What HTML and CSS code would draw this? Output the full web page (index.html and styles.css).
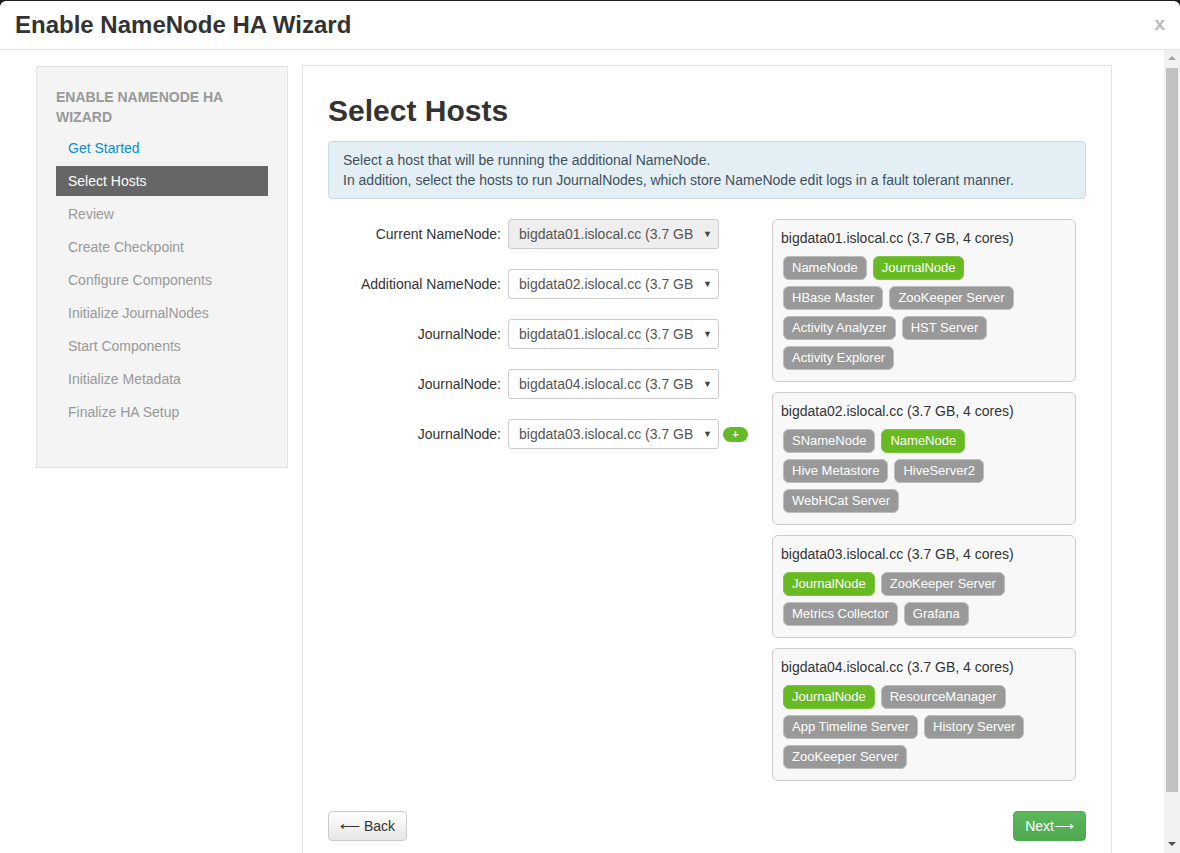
FILE: index.html
```html
<!DOCTYPE html>
<html>
<head>
<meta charset="utf-8">
<link rel="stylesheet" href="styles.css">
</head>
<body>
<div class="modal">
  <div class="modal-header">
    <h3 class="modal-title">Enable NameNode HA Wizard</h3>
    <span class="close">x</span>
  </div>
  <div class="modal-body">
    <div class="content">
      <div class="sidebar">
        <div class="nav-header">ENABLE NAMENODE HA WIZARD</div>
        <ul class="nav">
          <li class="done">Get Started</li>
          <li class="active">Select Hosts</li>
          <li>Review</li>
          <li>Create Checkpoint</li>
          <li>Configure Components</li>
          <li>Initialize JournalNodes</li>
          <li>Start Components</li>
          <li>Initialize Metadata</li>
          <li>Finalize HA Setup</li>
        </ul>
      </div>
      <div class="main">
        <h2 class="title">Select Hosts</h2>
        <div class="alert">Select a host that will be running the additional NameNode.<br>In addition, select the hosts to run JournalNodes, which store NameNode edit logs in a fault tolerant manner.</div>
        <div class="assign">
          <div class="form">
            <div class="row"><label>Current NameNode:</label><div class="select disabled"><span>bigdata01.islocal.cc (3.7 GB</span><i class="caret">▼</i></div></div>
            <div class="row"><label>Additional NameNode:</label><div class="select"><span>bigdata02.islocal.cc (3.7 GB</span><i class="caret">▼</i></div></div>
            <div class="row"><label>JournalNode:</label><div class="select"><span>bigdata01.islocal.cc (3.7 GB</span><i class="caret">▼</i></div></div>
            <div class="row"><label>JournalNode:</label><div class="select"><span>bigdata04.islocal.cc (3.7 GB</span><i class="caret">▼</i></div></div>
            <div class="row"><label>JournalNode:</label><div class="select"><span>bigdata03.islocal.cc (3.7 GB</span><i class="caret">▼</i></div><span class="plus">+</span></div>
          </div>
          <div class="hosts">
            <div class="host">
              <div class="host-name">bigdata01.islocal.cc (3.7 GB, 4 cores)</div>
              <div class="badges">
                <span class="badge">NameNode</span><span class="badge green">JournalNode</span>
                <span class="badge">HBase Master</span><span class="badge">ZooKeeper Server</span>
                <span class="badge">Activity Analyzer</span><span class="badge">HST Server</span>
                <span class="badge">Activity Explorer</span>
              </div>
            </div>
            <div class="host">
              <div class="host-name">bigdata02.islocal.cc (3.7 GB, 4 cores)</div>
              <div class="badges">
                <span class="badge">SNameNode</span><span class="badge green">NameNode</span>
                <span class="badge">Hive Metastore</span><span class="badge">HiveServer2</span>
                <span class="badge">WebHCat Server</span>
              </div>
            </div>
            <div class="host">
              <div class="host-name">bigdata03.islocal.cc (3.7 GB, 4 cores)</div>
              <div class="badges">
                <span class="badge green">JournalNode</span><span class="badge">ZooKeeper Server</span>
                <span class="badge">Metrics Collector</span><span class="badge">Grafana</span>
              </div>
            </div>
            <div class="host">
              <div class="host-name">bigdata04.islocal.cc (3.7 GB, 4 cores)</div>
              <div class="badges">
                <span class="badge green">JournalNode</span><span class="badge">ResourceManager</span>
                <span class="badge">App Timeline Server</span><span class="badge">History Server</span>
                <span class="badge">ZooKeeper Server</span>
              </div>
            </div>
          </div>
        </div>
        <div class="buttons">
          <button class="btn">⟵ Back</button>
          <button class="btn btn-success">Next⟶</button>
        </div>
      </div>
    </div>
    <div class="scrollbar">
      <div class="arrow up"></div>
      <div class="thumb"></div>
      <div class="arrow down"></div>
    </div>
  </div>
</div>
</body>
</html>
```
FILE: styles.css
```css
html, body {
  margin: 0;
  padding: 0;
  height: 100%;
  overflow: hidden;
}
body {
  background: #1c1c1c;
  font-family: "Liberation Sans", Arial, sans-serif;
  font-size: 14px;
  color: #333;
}
.modal {
  margin-top: 1px;
  height: 852px;
  background: #fff;
  border-radius: 6px 6px 0 0;
  display: flex;
  flex-direction: column;
  overflow: hidden;
}
.modal-header {
  height: 48px;
  border-bottom: 1px solid #e5e5e5;
  display: flex;
  align-items: center;
  justify-content: space-between;
  padding: 0 15px;
  flex-shrink: 0;
}
.modal-title {
  margin: 0;
  font-size: 24px;
  font-weight: bold;
  color: #333;
  line-height: 28px;
}
.close {
  color: #bbb;
  font-size: 19px;
  font-weight: bold;
  margin-top: -3px;
}
.modal-body {
  flex: 1;
  display: flex;
  min-height: 0;
}
.content {
  flex: 1;
  display: flex;
  align-items: flex-start;
  padding: 15px 0 0 36px;
  gap: 14px;
}
.sidebar {
  width: 212px;
  margin-top: 1px;
  background: #f4f4f4;
  border: 1px solid #e3e3e3;
  padding: 20px 19px 37px 19px;
}
.nav-header {
  font-weight: bold;
  color: #999;
  line-height: 20px;
  font-size: 14px;
}
.nav {
  list-style: none;
  margin: 6px 0 0;
  padding: 0;
}
.nav li {
  height: 30px;
  line-height: 30px;
  padding-left: 12px;
  color: #999;
  margin-bottom: 3px;
}
.nav li.done {
  color: #0a8fd4;
}
.nav li.active {
  background: #666;
  color: #fff;
}
.main {
  width: 758px;
  border: 1px solid #e3e3e3;
  border-bottom: none;
  padding: 27px 25px 40px 25px;
  min-height: 800px;
}
.title {
  margin: 0;
  font-size: 30px;
  font-weight: bold;
  line-height: 36px;
  color: #333;
}
.alert {
  margin-top: 12px;
  background: #e4eff5;
  border: 1px solid #c9dce6;
  border-radius: 4px;
  padding: 8px 14px;
  line-height: 20px;
  color: #3f505c;
  font-size: 14px;
}
.assign {
  display: flex;
  margin-top: 20px;
}
.form {
  width: 444px;
  display: flex;
  flex-direction: column;
  gap: 20px;
}
.row {
  display: flex;
  align-items: center;
  height: 30px;
}
.row label {
  width: 173px;
  text-align: right;
  padding-right: 7px;
  color: #333;
}
.select {
  width: 199px;
  height: 28px;
  border: 1px solid #ccc;
  border-radius: 3px;
  padding-left: 10px;
  display: flex;
  align-items: center;
  justify-content: space-between;
  color: #555;
  background: #fff;
  overflow: hidden;
  white-space: nowrap;
}
.select.disabled {
  background: #eee;
}
.caret {
  font-style: normal;
  font-size: 9px;
  color: #444;
  padding: 0 6px 0 4px;
}
.select.disabled .caret {
  background: #eee;
}
.select:not(.disabled) .caret {
  background: #fff;
}
.plus {
  margin-left: 4px;
  width: 25px;
  height: 15px;
  border-radius: 8px;
  background: #64ba27;
  color: #fff;
  font-weight: bold;
  font-size: 11px;
  line-height: 15px;
  text-align: center;
}
.hosts {
  width: 304px;
  display: flex;
  flex-direction: column;
  gap: 10px;
}
.host {
  background: #f8f8f8;
  border: 1px solid #ccc;
  border-radius: 6px;
  padding: 8px 8px 5px 8px;
}
.host-name {
  line-height: 20px;
  color: #333;
}
.badges {
  display: flex;
  flex-wrap: wrap;
  margin-top: 8px;
  padding-left: 2px;
}
.badge {
  display: inline-block;
  height: 22px;
  line-height: 22px;
  padding: 0 8px;
  border: 1px solid #bdbdbd;
  border-radius: 6px;
  background: #999;
  color: #fff;
  font-size: 13px;
  margin: 0 6px 6px 0;
}
.badge.green {
  background: #68ba23;
  border-color: #7cc442;
}
.buttons {
  display: flex;
  justify-content: space-between;
  margin-top: 30px;
}
.btn {
  height: 30px;
  padding: 0 11px;
  border: 1px solid #ccc;
  border-radius: 4px;
  background: linear-gradient(#fff, #e6e6e6);
  font-family: "Liberation Sans", Arial, sans-serif;
  font-size: 14px;
  color: #333;
}
.btn-success {
  border-color: #4cae4c;
  background: linear-gradient(#5cb85c, #4fa84f);
  color: #fff;
  padding: 0 11px;
}
.scrollbar {
  width: 16px;
  background: #f1f1f1;
  display: flex;
  flex-direction: column;
  align-items: center;
  flex-shrink: 0;
}
.arrow {
  width: 0;
  height: 0;
  border-left: 4px solid transparent;
  border-right: 4px solid transparent;
}
.arrow.up {
  border-bottom: 4px solid #a3a3a3;
  margin: 6px 0 8px;
}
.arrow.down {
  border-top: 4px solid #505050;
  margin: 50px 0 6px;
}
.thumb {
  width: 12px;
  height: 724px;
  background: #c1c1c1;
}
```
